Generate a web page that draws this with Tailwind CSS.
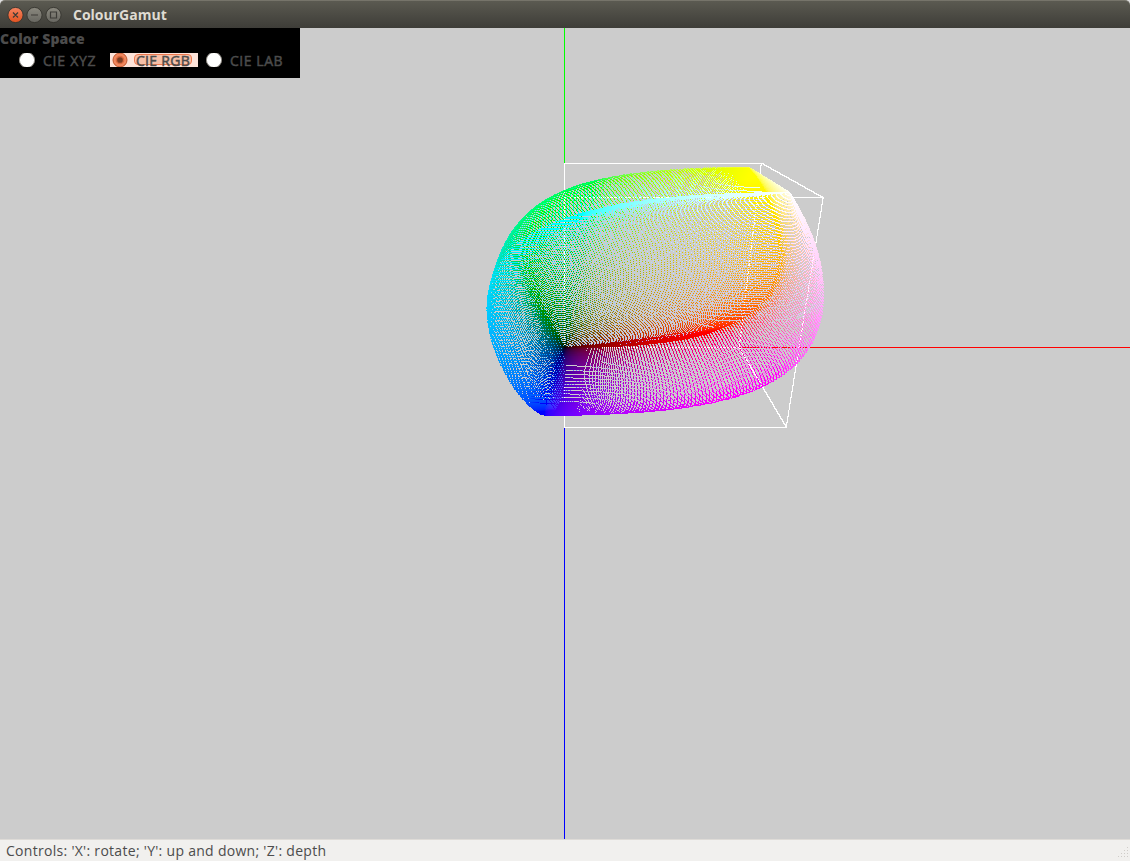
<!DOCTYPE html>
<html lang="en">
<head>
<meta charset="utf-8">
<title>ColourGamut</title>
<script src="https://cdn.jsdelivr.net/npm/@tailwindcss/browser@4"></script>
</head>
<body class="bg-[#ccc]">
<div class="w-[1130px] h-[861px] flex flex-col overflow-hidden font-['Open_Sans','Noto_Sans',sans-serif] bg-[#dfdfdf]">
  <header class="h-7 shrink-0 flex items-center rounded-t-[5px] border-t border-[#76746a] bg-linear-to-b from-[#5b5a51] to-[#3e3d38] pl-[7px]">
    <svg width="56" height="18" viewBox="0 0 56 18" class="shrink-0">
      <defs>
        <linearGradient id="o" x2="0" y2="1"><stop stop-color="#f58461"/><stop offset="1" stop-color="#e2521f"/></linearGradient>
        <linearGradient id="g" x2="0" y2="1"><stop stop-color="#8b897f"/><stop offset="1" stop-color="#676660"/></linearGradient>
      </defs>
      <circle cx="8.5" cy="9" r="7.6" fill="url(#o)" stroke="#35342f" stroke-width=".9"/>
      <circle cx="27.5" cy="9" r="7.6" fill="url(#g)" stroke="#35342f" stroke-width=".9"/>
      <circle cx="46.5" cy="9" r="7.6" fill="url(#g)" stroke="#35342f" stroke-width=".9"/>
      <path d="M6 6.5l5 5M11 6.5l-5 5M24 9h7M43.5 6h6v6h-6z" fill="none" stroke="#3c3b37" stroke-width="1.2"/>
    </svg>
    <h1 class="ml-[10px] text-[14px] leading-5 font-bold text-[#dfdbd2] whitespace-nowrap">ColourGamut</h1>
  </header>
  <main class="relative h-[811px] shrink-0 bg-[#ccc]">
    <canvas id="view" width="1130" height="811" class="block"></canvas>
    <fieldset class="absolute left-0 top-0 w-[300px] h-[50px] bg-black text-[#4c4c4c]">
      <div class="h-[25px] pt-[1px] text-[14px] leading-5 font-extrabold whitespace-nowrap tracking-[0.1px]">Color Space</div>
      <div class="flex h-[14px] text-[14px] leading-[16px] whitespace-nowrap tracking-[0.4px] [-webkit-text-stroke:0.5px_#4c4c4c]">
        <div class="ml-[19px] w-[91px] flex">
          <svg width="16" height="14" viewBox="0 0 16 14"><circle cx="8" cy="7" r="7.6" fill="#fff" stroke="#8d8982"/></svg>
          <span class="ml-2 tracking-[0.75px]">CIE XYZ</span>
        </div>
        <div class="w-[88px] flex bg-[#fde3d9]">
          <svg width="20" height="14" viewBox="0 0 20 14"><circle cx="10" cy="7" r="7" fill="#f0875e" stroke="#c0562e"/><circle cx="10" cy="7" r="3.6" fill="#7b3d25" stroke="#d9683d" stroke-width="1.5"/></svg>
          <span class="ml-1 mt-px h-[11px] w-[58px] rounded-[4px] border border-[#ee7a4f] bg-[#f6bfa7] pl-[1px] leading-[12px] tracking-[0.3px]">CIE RGB</span>
        </div>
        <div class="ml-2 flex">
          <svg width="16" height="14" viewBox="0 0 16 14"><circle cx="8" cy="7" r="7.6" fill="#fff" stroke="#8d8982"/></svg>
          <span class="ml-2 tracking-[0.55px]">CIE LAB</span>
        </div>
      </div>
    </fieldset>
  </main>
  <footer class="h-[22px] shrink-0 flex justify-between border-t border-[#dedbd7] bg-[#f1f0ee] text-[#4c4c4c]">
    <p class="pl-[6px] text-[14px] leading-[22px] whitespace-nowrap tracking-[0.29px]">Controls: 'X': rotate; 'Y': up and down; 'Z': depth</p>
    <svg width="14" height="21" viewBox="0 0 14 21" fill="#cfccc8"><path d="M11 7h1v1h-1zM8 10h1v1h-1zM11 10h1v1h-1zM5 13h1v1h-1zM8 13h1v1h-1zM11 13h1v1h-1zM2 16h1v1h-1zM5 16h1v1h-1zM8 16h1v1h-1zM11 16h1v1h-1z"/></svg>
  </footer>
</div>
<script>
// CIE 1931 2-degree colour matching functions, 5 nm steps from 380 nm.
const CX=[.001368,.002236,.004243,.00765,.01431,.02319,.04351,.07763,.13438,.21477,.2839,.3285,.34828,.34806,.3362,.3187,.2908,.2511,.19536,.1421,.09564,.05795,.03201,.0147,.0049,.0024,.0093,.0291,.06327,.1096,.1655,.22575,.2904,.3597,.43345,.51205,.5945,.6784,.7621,.8425,.9163,.9786,1.0263,1.0567,1.0622,1.0456,1.0026,.9384,.85445,.7514,.6424,.5419,.4479,.3608,.2835,.2187,.1649,.1212,.0874,.0636,.04677,.0329,.0227,.01584,.011359,.008111,.00579,.004109,.002899,.002049,.00144,.001,.00069,.000476,.000332,.000235,.000166,.000117,.000083,.000059,.000042];
const CY=[.000039,.000064,.00012,.000217,.000396,.00064,.00121,.00218,.004,.0073,.0116,.01684,.023,.0298,.038,.048,.06,.0739,.09098,.1126,.13902,.1693,.20802,.2586,.323,.4073,.503,.6082,.71,.7932,.862,.91485,.954,.9803,.99495,1,.995,.9786,.952,.9154,.87,.8163,.757,.6949,.631,.5668,.503,.4412,.381,.321,.265,.217,.175,.1382,.107,.0816,.061,.04458,.032,.0232,.017,.01192,.00821,.005723,.004102,.002929,.002091,.001484,.001047,.00074,.00052,.000361,.000249,.000172,.00012,.000085,.00006,.000042,.00003,.000021,.000015];
const CZ=[.00645,.01055,.02005,.03621,.06785,.1102,.2074,.3713,.6456,1.03905,1.3856,1.62296,1.74706,1.7826,1.77211,1.7441,1.6692,1.5281,1.28764,1.0419,.81295,.6162,.46518,.3533,.272,.2123,.1582,.1117,.07825,.05725,.04216,.02984,.0203,.0134,.00875,.00575,.0039,.00275,.0021,.0018,.00165,.0014,.0011,.001,.0008,.0006,.00034,.00024,.00019,.0001,.00005,.00003,.00002,.00001];
// D65 daylight, 10 nm steps.
const D65=[50,54.6,82.8,91.5,93.4,86.7,104.9,117,117.8,114.9,115.9,108.8,109.4,107.8,104.8,107.7,104.4,104,100,96.3,95.8,88.7,90,89.6,87.7,83.3,83.7,80,80.2,82.3,78.3,69.7,71.6,74.3,61.6,69.9,75.1,63.6,46.4,66.8,63.4];
const cubic=(a,t)=>{const i=Math.floor(t),f=t-i,g=k=>a[Math.max(0,k)]||0,p=g(i-1),q=g(i),r=g(i+1),s=g(i+2);
  return q+.5*f*(r-p+f*(2*p-5*q+4*r-s+f*(3*(q-r)+s-p)));};
const lin=(a,t)=>{const i=Math.min(Math.floor(t),a.length-2);return a[i]+(a[i+1]-a[i])*(t-i);};
const N=401,spec=[];let ys=0;
for(let n=0;n<N;n++){const d=lin(D65,n/10),v=[cubic(CX,n/5)*d,cubic(CY,n/5)*d,cubic(CZ,n/5)*d];ys+=v[1];spec.push(v);}
const W=1130,H=811,ctx=document.getElementById('view').getContext('2d'),img=ctx.createImageData(W,H),px=img.data;
for(let i=0;i<W*H;i++){px[i*4]=px[i*4+1]=px[i*4+2]=204;px[i*4+3]=255;}
// Perspective projection of an (x, y, z) colour-space position to one pixel.
function plot(x,y,z,c){
  const w=1-.1125*y-.2125*z,sx=Math.floor(564.8+174.4*x/w),sy=Math.floor((347.6-202.9*y-11.3*z)/w)-28;
  if(w<=0||sx<0||sy<0||sx>=W||sy>=H)return;
  const k=sy*W+sx;px[k*4]=c[0];px[k*4+1]=c[1];px[k*4+2]=c[2];
}
function line(a,b,c,n=3000){for(let i=0;i<=n;i++){const t=i/n;plot(a[0]+(b[0]-a[0])*t,a[1]+(b[1]-a[1])*t,a[2]+(b[2]-a[2])*t,c);}}
line([1,0,0],[4,0,0],[255,0,0]);
line([0,1,0],[0,3,0],[0,255,0]);
line([0,0,1],[0,0,4],[0,0,255],8000);
const wh=[255,255,255];
for(const u of[0,1])for(const v of[0,1]){line([0,u,v],[1,u,v],wh);line([u,0,v],[u,1,v],wh);line([u,v,0],[u,v,1],wh);}
const gam=v=>{v=Math.min(1,Math.max(0,v));return 255*(v<=.0031308?12.92*v:1.055*Math.pow(v,1/2.4)-.055);};
// Every contiguous (cyclic) wavelength band gives one optimal colour.
for(let i=0;i<N;i++){
  let X=0,Y=0,Z=0;
  for(let k=0;k<N;k++){
    const s=spec[(i+k)%N];X+=s[0]/ys;Y+=s[1]/ys;Z+=s[2]/ys;
    plot(2.3646*X-.8965*Y-.4681*Z,-.5152*X+1.4264*Y+.0888*Z,.0052*X-.0144*Y+1.0092*Z,
      [gam(3.2406*X-1.5372*Y-.4986*Z),gam(-.9689*X+1.8758*Y+.0415*Z),gam(.0557*X-.204*Y+1.057*Z)]);
  }
}
ctx.putImageData(img,0,0);
</script>
</body>
</html>
